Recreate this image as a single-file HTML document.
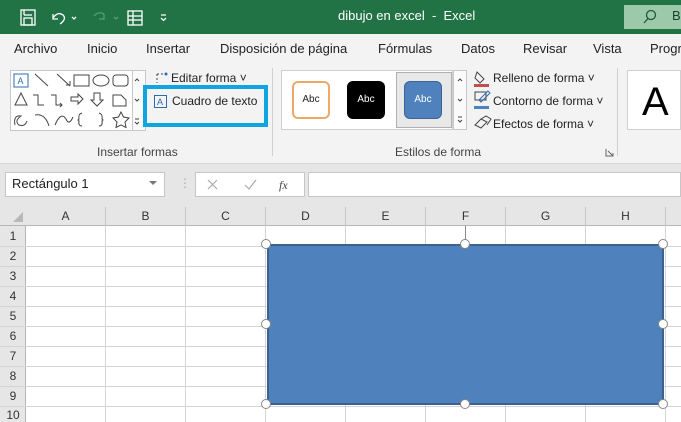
<!DOCTYPE html>
<html><head><meta charset="utf-8"><style>
*{margin:0;padding:0;box-sizing:border-box}
body{width:681px;height:422px;overflow:hidden;position:relative;font-family:"Segoe UI","Liberation Sans",sans-serif;background:#fff;color:#222}
.a{position:absolute}
.t{font-size:13px;white-space:nowrap}
.s{font-size:12px;white-space:nowrap}
.hl{position:absolute;left:0;width:681px;height:1px;background:#d4d4d4}
.vl{position:absolute;top:226px;width:1px;height:196px;background:#d4d4d4}
.rn{position:absolute;left:0;width:26px;text-align:center;font-size:12px;color:#333}
.ch{position:absolute;top:207px;height:19px;width:80px;text-align:center;font-size:12px;color:#333;line-height:19px;border-right:1px solid #c6c6c6}
.h{position:absolute;width:10px;height:10px;border-radius:50%;background:#fff;border:1.5px solid #888}
</style></head><body>
<!-- title bar -->
<div class="a" style="left:0;top:0;width:681px;height:34px;background:#217346"></div>
<svg class="a" style="left:18px;top:8px" width="150" height="20" fill="none" stroke="#fff" stroke-width="1.3">
<rect x="3" y="2" width="14" height="15"/><rect x="6" y="10" width="8" height="7"/><line x1="6" y1="2" x2="6" y2="7"/><line x1="6" y1="7" x2="14" y2="7"/>
<path d="M35 6 L35 11 L40 11 M35 10 Q40 3 45 7 Q49 11 42 16"/><path d="M54 9l2 2 2-2"/>
<path d="M86 6 Q80 3 76 8 M86 6 L86 11 L81 11" stroke="#5c9a7a"/><path d="M96 9l2 2 2-2" stroke="#5c9a7a"/>
<rect x="110" y="3" width="14" height="14"/><line x1="110" y1="8" x2="124" y2="8"/><line x1="110" y1="12" x2="124" y2="12"/><line x1="115" y1="3" x2="115" y2="17"/>
<path d="M143 7h5 M143 10l2.5 2.5 2.5-2.5"/>
</svg>
<div class="a t" style="left:338px;top:8px;color:#fff">dibujo en excel &nbsp;-&nbsp; Excel</div>
<div class="a" style="left:624px;top:5px;width:57px;height:24px;background:#9bc9a9"></div>
<svg class="a" style="left:643px;top:9px" width="14" height="16" fill="none" stroke="#1e5a35" stroke-width="1.3"><circle cx="8" cy="6" r="4.5"/><line x1="5" y1="9.5" x2="1" y2="14"/></svg>
<div class="a t" style="left:672px;top:8px;color:#1e3d2a">B</div>
<!-- tabs -->
<div class="a" style="left:0;top:34px;width:681px;height:130px;background:#f3f3f3"></div>
<div class="a t" style="top:41px;left:14px">Archivo</div>
<div class="a t" style="top:41px;left:87px">Inicio</div>
<div class="a t" style="top:41px;left:146px">Insertar</div>
<div class="a t" style="top:41px;left:220px">Disposición de página</div>
<div class="a t" style="top:41px;left:378px">Fórmulas</div>
<div class="a t" style="top:41px;left:461px">Datos</div>
<div class="a t" style="top:41px;left:523px">Revisar</div>
<div class="a t" style="top:41px;left:593px">Vista</div>
<div class="a t" style="top:41px;left:650px">Progr</div>
<!-- ribbon -->
<div class="a" style="left:10px;top:70px;width:124px;height:61px;background:#fff;border:1px solid #c8c8c8"></div>
<div class="a" style="left:132px;top:70px;width:14px;height:61px;border:1px solid #c8c8c8;background:#fafafa"></div>
<svg class="a" style="left:11px;top:71px" width="135" height="60" fill="none" stroke="#444" stroke-width="1">
<rect x="3" y="3" width="14" height="13" stroke="#2b6cb0"/><text x="6.5" y="13" font-size="9" fill="#2b6cb0" stroke="none" font-family="Liberation Sans">A</text>
<line x1="24" y1="3" x2="37" y2="15"/><path d="M46 3 L59 15 M55 14h4v-4"/>
<rect x="63" y="4" width="15" height="11"/><ellipse cx="90" cy="9.5" rx="8" ry="5.5"/><rect x="102" y="4" width="15" height="11" rx="3"/>
<path d="M4 34 L10 22 L16 34Z"/><path d="M22 24h5v10h6"/><path d="M40 24h5v10h6 M49 32l2 2-2 2"/><path d="M60 26h7v-3l5 5-5 5v-3h-7z"/><path d="M83 22h6v7h3l-6 6-6-6h3z"/><path d="M102 24h8l5 5v6h-13z"/>
<path d="M4 54 Q2 44 10 45 Q3 50 8 54 Q14 56 16 50"/><path d="M24 44 Q34 42 38 55"/><path d="M44 54 Q50 40 55 48 Q58 55 62 46"/><path d="M71 42 Q67 43 68 48 Q66 49 68 50 Q67 55 71 55"/><path d="M88 42 Q92 43 91 48 Q93 49 91 50 Q92 55 88 55"/><path d="M110 41 l2.5 5 5.5 1 -4 4 1 5.5 -5-2.6 -5 2.6 1-5.5 -4-4 5.5-1z"/>
<path d="M124 10l2-2 2 2 M124 28l2 2 2-2 M124 48h4 M124 51l2 2 2-2"/>
</svg>
<svg class="a" style="left:154px;top:71px" width="16" height="14" fill="none" stroke="#444"><path d="M3 3h9 M3 3v9" stroke-dasharray="2 2"/><circle cx="12" cy="3" r="1.5" fill="#2b6cb0" stroke="none"/></svg>
<div class="a s" style="left:171px;top:71px">Editar forma ˅</div>
<div class="a" style="left:143px;top:85px;width:125px;height:42px;border:4px solid #0ea5e0"></div>
<svg class="a" style="left:153px;top:94px" width="16" height="16" fill="none"><rect x="1.5" y="1.5" width="12" height="12" stroke="#2b6cb0"/><text x="4" y="11" font-size="9" fill="#2b6cb0" font-family="Liberation Sans">A</text></svg>
<div class="a s" style="left:172px;top:94px">Cuadro de texto</div>
<div class="a s" style="left:97px;top:145px;color:#444">Insertar formas</div>
<div class="a" style="left:272px;top:68px;width:1px;height:88px;background:#d0d0d0"></div>
<div class="a" style="left:281px;top:70px;width:172px;height:60px;background:#fff;border:1px solid #d0d0d0"></div>
<div class="a" style="left:292px;top:81px;width:38px;height:38px;border:2px solid #f0a868;border-radius:6px;background:#fff;font-size:10px;text-align:center;line-height:34px">Abc</div>
<div class="a" style="left:347px;top:81px;width:38px;height:38px;border-radius:6px;background:#000;color:#fff;font-size:10px;text-align:center;line-height:38px">Abc</div>
<div class="a" style="left:396px;top:72px;width:56px;height:56px;background:#e8e8e8;border:1px solid #b0b0b0"></div>
<div class="a" style="left:404px;top:81px;width:38px;height:38px;border-radius:6px;background:#4f81bd;border:1.5px solid #3a6494;color:#fff;font-size:10px;text-align:center;line-height:35px">Abc</div>
<div class="a" style="left:453px;top:70px;width:14px;height:60px;border:1px solid #c8c8c8;background:#fafafa"></div>
<svg class="a" style="left:454px;top:71px" width="12" height="58" fill="none" stroke="#444"><path d="M4 10l2-2 2 2 M4 28l2 2 2-2 M4 46h4 M4 49l2 2 2-2"/></svg>
<svg class="a" style="left:472px;top:68px" width="20" height="66" fill="none" stroke="#444">
<path d="M5 4l7 7-4 4-5-5z"/><rect x="2" y="16" width="15" height="3" fill="#c0504d" stroke="none"/>
<path d="M3 24h11v8H3z"/><path d="M7 32l9-9 2 2-9 9z" stroke="#2b6cb0"/><rect x="2" y="38" width="15" height="3" fill="#4f81bd" stroke="none"/>
<path d="M3 57l6-6 6 3-6 6z M9 51l5-3 5 3-4 6"/>
</svg>
<div class="a s" style="left:493px;top:71px">Relleno de forma ˅</div>
<div class="a s" style="left:493px;top:94px">Contorno de forma ˅</div>
<div class="a s" style="left:493px;top:117px">Efectos de forma ˅</div>
<div class="a s" style="left:395px;top:145px;color:#444">Estilos de forma</div>
<svg class="a" style="left:605px;top:148px" width="9" height="9" fill="none" stroke="#666"><path d="M1 1v7h7 M3 3l5 5 M5 8h3v-3"/></svg>
<div class="a" style="left:617px;top:68px;width:1px;height:88px;background:#d0d0d0"></div>
<div class="a" style="left:627px;top:70px;width:54px;height:60px;background:#fff;border:1px solid #d0d0d0"></div>
<div class="a" style="left:642px;top:80px;font-size:40px;line-height:44px;color:#000;font-family:'Liberation Sans',sans-serif">A</div>
<div class="a" style="left:0;top:163px;width:681px;height:1px;background:#d6d6d6"></div>
<!-- formula bar -->
<div class="a" style="left:0;top:164px;width:681px;height:62px;background:#e6e6e6"></div>
<div class="a" style="left:5px;top:172px;width:160px;height:25px;background:#fff;border:1px solid #c6c6c6"></div>
<div class="a t" style="left:12px;top:176px">Rectángulo 1</div>
<svg class="a" style="left:149px;top:181px" width="9" height="6"><path d="M0 0h8l-4 4z" fill="#777"/></svg>
<div class="a" style="left:179px;top:176px;color:#aaa;font-size:12px">⋮</div>
<div class="a" style="left:195px;top:172px;width:110px;height:25px;background:#fff;border:1px solid #c6c6c6"></div>
<svg class="a" style="left:205px;top:177px" width="100" height="16" fill="none" stroke="#aaa" stroke-width="1.2"><path d="M3 3l9 9 M12 3l-9 9"/><path d="M40 8l4 4 7-9"/><text x="74" y="12" font-size="12" font-style="italic" fill="#444" stroke="none" font-family="Liberation Serif">fx</text></svg>
<div class="a" style="left:308px;top:172px;width:373px;height:25px;background:#fff;border:1px solid #c6c6c6"></div>
<!-- headers -->
<div class="a" style="left:0;top:207px;width:681px;height:19px;background:#e6e6e6;border-bottom:1px solid #b5b5b5"></div>
<svg class="a" style="left:12px;top:211px" width="12" height="12"><path d="M11 1v10H1z" fill="#b8b8b8"/></svg>
<div class="ch" style="left:26px">A</div><div class="ch" style="left:106px">B</div><div class="ch" style="left:186px">C</div><div class="ch" style="left:266px">D</div><div class="ch" style="left:346px">E</div><div class="ch" style="left:426px">F</div><div class="ch" style="left:506px">G</div><div class="ch" style="left:586px">H</div>
<div class="a" style="left:0;top:226px;width:26px;height:196px;background:#e6e6e6;border-right:1px solid #b5b5b5"></div>
<div class="rn" style="top:229px">1</div><div class="rn" style="top:249px">2</div><div class="rn" style="top:269px">3</div><div class="rn" style="top:289px">4</div><div class="rn" style="top:309px">5</div><div class="rn" style="top:329px">6</div><div class="rn" style="top:349px">7</div><div class="rn" style="top:369px">8</div><div class="rn" style="top:389px">9</div><div class="rn" style="top:408px">10</div>
<div class="hl" style="top:246px"></div><div class="hl" style="top:266px"></div><div class="hl" style="top:286px"></div><div class="hl" style="top:306px"></div><div class="hl" style="top:326px"></div><div class="hl" style="top:346px"></div><div class="hl" style="top:366px"></div><div class="hl" style="top:386px"></div><div class="hl" style="top:406px"></div>
<div class="vl" style="left:105px"></div><div class="vl" style="left:185px"></div><div class="vl" style="left:265px"></div><div class="vl" style="left:345px"></div><div class="vl" style="left:425px"></div><div class="vl" style="left:505px"></div><div class="vl" style="left:585px"></div><div class="vl" style="left:665px"></div>
<!-- shape -->
<div class="a" style="left:465px;top:226px;width:1px;height:18px;background:#888"></div>
<div class="a" style="left:267px;top:244px;width:397px;height:161px;background:#4f81bd;border:2px solid #3d6290"></div>
<div class="h" style="left:261px;top:239px"></div><div class="h" style="left:460px;top:239px"></div><div class="h" style="left:658px;top:239px"></div>
<div class="h" style="left:261px;top:319px"></div><div class="h" style="left:658px;top:319px"></div>
<div class="h" style="left:261px;top:399px"></div><div class="h" style="left:460px;top:399px"></div><div class="h" style="left:658px;top:399px"></div>
</body></html>
